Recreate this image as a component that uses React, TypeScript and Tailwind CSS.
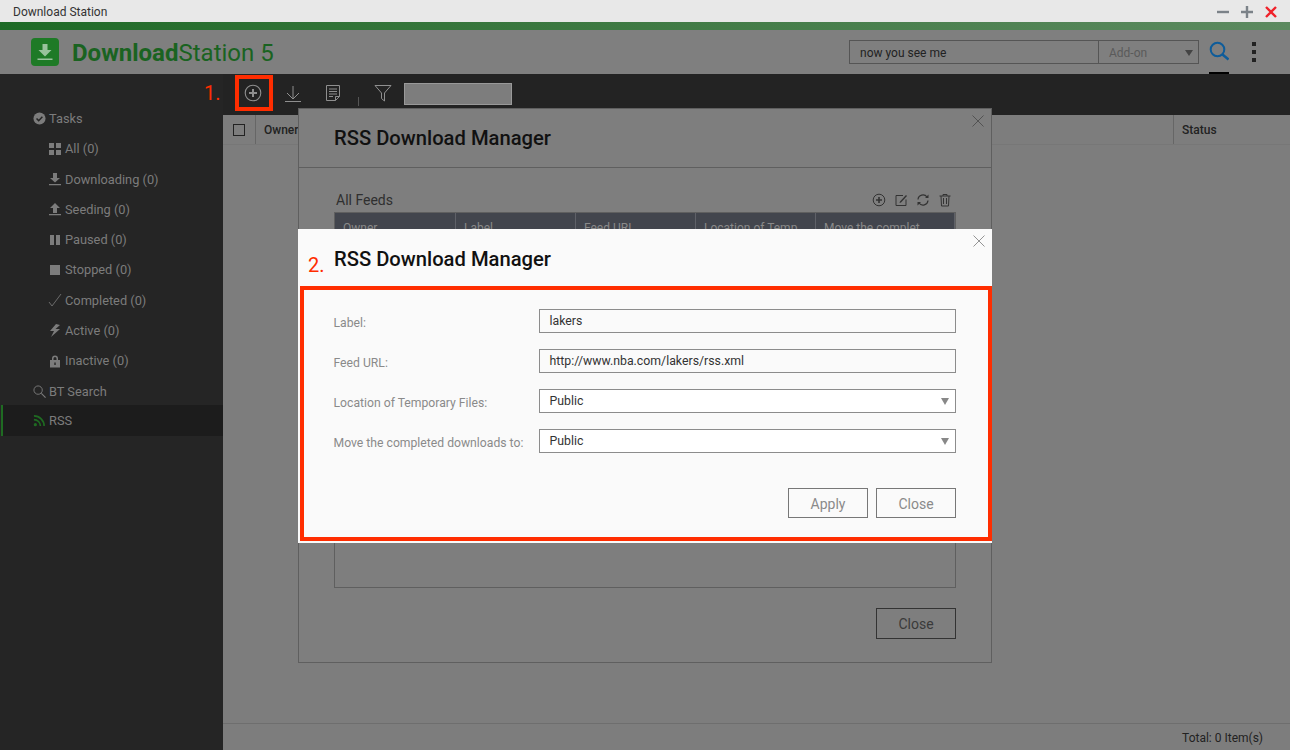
import { ReactNode } from 'react';

const Ico = ({ children, className = 'w-[14px] h-[14px]' }: { children: ReactNode; className?: string }) => (
  <svg viewBox="0 0 14 14" className={`${className} shrink-0`} fill="currentColor">
    {children}
  </svg>
);

const tasks: { label: string; icon: ReactNode }[] = [
  { label: 'All (0)', icon: <path d="M1 1h5v5H1zM8 1h5v5H8zM1 8h5v5H1zM8 8h5v5H8z" /> },
  { label: 'Downloading (0)', icon: <path d="M5 1h4v5h3L7 10.500 2 6h3zM1 12h12v1.200H1z" /> },
  { label: 'Seeding (0)', icon: <path d="M7 1l5 5H9v5H5V6H2zM1 12h12v1.200H1z" /> },
  { label: 'Paused (0)', icon: <path d="M2 2h4v10H2zM8 2h4v10H8z" /> },
  { label: 'Stopped (0)', icon: <path d="M2 2h10v10H2z" /> },
  { label: 'Completed (0)', icon: <path d="M1 9l3 4 9-12" fill="none" stroke="currentColor" strokeWidth="0.8" /> },
  { label: 'Active (0)', icon: <path d="M8 0L2 7h4l-3 6 9-8H7.500L12 1z" /> },
  { label: 'Inactive (0)', icon: <path d="M4 6V4.500a3 3 0 0 1 6 0V6h2v7.500H2V6zm1.500 0h3V4.500a1.500 1.500 0 0 0-3 0zM6.300 8.500v2.500h1.400V8.500z" fillRule="evenodd" /> },
];

const Sidebar = () => (
  <aside className="w-[223px] shrink-0 bg-[#252525] pt-[29.400px] text-[12.800px] text-[#7c7c7c]">
    <div className="flex h-[30.300px] items-center gap-[3px] pl-[33px]">
      <Ico className="w-[13px] h-[13px]">
        <circle cx="7" cy="7" r="6.500" />
        <path d="M3.800 7l2.300 2.300 4-4.300" fill="none" stroke="#252525" strokeWidth="1.600" />
      </Ico>
      <span>Tasks</span>
    </div>
    {tasks.map((t) => (
      <div key={t.label} className="flex h-[30.300px] items-center gap-[3px] pl-[48px]">
        <Ico>{t.icon}</Ico>
        <span>{t.label}</span>
      </div>
    ))}
    <div className="flex h-[30.300px] items-center gap-[3px] pl-[33px]">
      <Ico className="w-[13px] h-[13px]">
        <circle cx="5.500" cy="5.500" r="4.500" fill="none" stroke="currentColor" strokeWidth="1" />
        <path d="M9 9l4.500 4.500" stroke="currentColor" strokeWidth="1.200" />
      </Ico>
      <span>BT Search</span>
    </div>
    <div className="-mt-[1px] ml-[1px] flex h-[31px] items-center gap-[3px] border-l-2 border-[#1f6b22] bg-[#1c1c1c] pl-[30px]">
      <Ico className="w-[13px] h-[13px] text-[#1f6b22]">
        <circle cx="2.500" cy="11.500" r="1.700" />
        <path d="M1 6a7 7 0 0 1 7 7M1 2a11 11 0 0 1 11 11" fill="none" stroke="currentColor" strokeWidth="1.800" />
      </Ico>
      <span>RSS</span>
    </div>
  </aside>
);

const Toolbar = () => (
  <div className="flex h-[41px] shrink-0 items-center bg-[#232323] pb-[1px] pl-[20px] text-[#8f8f8f]">
    <svg viewBox="0 0 20 20" className="mb-[2px] w-5 h-5 shrink-0">
      <circle cx="10" cy="10" r="7.800" fill="none" stroke="currentColor" strokeWidth="1.100" />
      <path d="M10 6v8M6 10h8" stroke="currentColor" strokeWidth="2" />
    </svg>
    <svg viewBox="0 0 20 20" className="mb-[2px] w-5 h-5 ml-5 shrink-0">
      <path d="M10 3v13M4 10l6 6 6-6M2 18.500h16" fill="none" stroke="currentColor" strokeWidth="1" />
    </svg>
    <svg viewBox="0 0 20 20" className="mb-[2px] w-5 h-5 ml-5 shrink-0">
      <path d="M3.500 2.500h13v11l-4 4h-9zM12.500 17.500v-4h4M6 6h8M6 8.500h8M6 11h8M6 13.500h4" fill="none" stroke="currentColor" strokeWidth="1" />
    </svg>
    <span className="ml-[15px] mt-[15px] h-[9px] w-px bg-[#555]" />
    <svg viewBox="0 0 20 20" className="mb-[2px] w-5 h-5 ml-[14px] shrink-0">
      <path d="M2 2.500h16l-6.500 7.500v8l-3-2.500V10z" fill="none" stroke="currentColor" strokeWidth="1" />
    </svg>
    <div className="ml-[11px] h-[22px] w-[108px] border border-[#999] bg-[#7d7d7d]" />
  </div>
);

const TableHeader = () => (
  <div className="flex h-[30px] shrink-0 items-center border-b border-[#777] text-[12px] font-medium text-[#222]">
    <div className="flex h-full w-[33px] items-center pl-[10px] border-r border-[#666]">
      <span className="h-[12px] w-[12px] border border-[#222]" />
    </div>
    <span className="ml-[8px] flex-1">Owner</span>
    <div className="flex h-full w-[117px] items-center pl-[8px] border-l border-[#666]">Status</div>
  </div>
);

const CloseX = ({ className }: { className: string }) => (
  <svg viewBox="0 0 12 12" className={`absolute right-[7px] w-[12px] h-[12px] ${className}`}>
    <path d="M0.500 0.500l11 11M11.500 0.500l-11 11" stroke="currentColor" strokeWidth="0.900" fill="none" />
  </svg>
);

const BackModal = () => (
  <div className="absolute left-[298px] top-[108px] h-[555px] w-[694px] border border-[#5f5f5f] bg-[#7e7e7e]">
    <CloseX className="top-[6px] text-[#4d4d4d]" />
    <div className="flex h-[59px] items-center border-b border-[#5f5f5f] pl-[35px] pt-[1px] text-[20.200px] font-medium text-[#111]">
      RSS Download Manager
    </div>
    <div className="px-[35px] pt-[21px]">
      <div className="flex h-[22px] items-center justify-between pl-[2px] text-[14px] text-[#2f2f2f]">
        <span>All Feeds</span>
        <div className="flex items-center gap-[8px] pr-[4px] text-[#333]">
          <svg viewBox="0 0 14 14" className="w-[14px] h-[14px]">
            <circle cx="7" cy="7" r="5.800" fill="none" stroke="currentColor" strokeWidth="1" />
            <path d="M7 4v6M4 7h6" stroke="currentColor" strokeWidth="1.600" />
          </svg>
          <svg viewBox="0 0 14 14" className="w-[14px] h-[14px]">
            <path d="M9 2.500H2v10h10V6.500" fill="none" stroke="currentColor" strokeWidth="1" />
            <path d="M6 8.500l6-6.500 1 1-6 6.500-1.500 0.500z" fill="currentColor" />
          </svg>
          <svg viewBox="0 0 14 14" className="w-[14px] h-[14px]">
            <path d="M2 6.500a5 5 0 0 1 9-2.500M12 7.500a5 5 0 0 1-9 2.500" fill="none" stroke="currentColor" strokeWidth="1.200" />
            <path d="M12.500 1.500v3.500H9zM1.500 12.500V9H5z" fill="currentColor" />
          </svg>
          <svg viewBox="0 0 14 14" className="w-[14px] h-[14px]">
            <path d="M1.500 3h11M5 3V1.500h4V3M3 3l0.500 10h7l0.500-10M5.500 5v6M8.500 5v6" fill="none" stroke="currentColor" strokeWidth="1" />
          </svg>
        </div>
      </div>
      <div className="mt-[1px] h-[376px] border border-[#5f5f5f]">
        <div className="grid h-[30px] grid-cols-[121px_120px_120px_120px_1fr] bg-[#42454d] text-[12px] text-[#8a8a8a]">
          {['Owner', 'Label', 'Feed URL', 'Location of Temp', 'Move the complet'].map((c) => (
            <div key={c} className="border-r border-[#5f6168] pl-[8px] pt-[6px]">
              {c}
            </div>
          ))}
        </div>
      </div>
      <div className="mt-[20px] flex justify-end">
        <div className="flex h-[31px] w-[80px] items-center justify-center border border-[#333] pt-[2px] text-[14px] text-[#3a3a3a]">
          Close
        </div>
      </div>
    </div>
  </div>
);

const Field = ({ label, value, select }: { label: string; value: string; select?: boolean }) => (
  <div className="flex h-[24px] items-center">
    <span className="w-[205px] shrink-0 pt-[5px] text-[12.200px] text-[#8a8a8a]">{label}</span>
    <div
      className={`flex h-[24px] flex-1 items-center justify-between border border-[#8c8c8c] pl-[10px] pr-[6px] pt-[1px] text-[12.300px] text-[#333] ${
        select ? 'bg-white' : 'bg-[#fafafa]'
      }`}
    >
      <span>{value}</span>
      {select && <span className="h-0 w-0 border-x-[4px] border-t-[7px] border-x-transparent border-t-[#888]" />}
    </div>
  </div>
);

const FrontModal = () => (
  <div className="absolute left-[298px] top-[229px] h-[314px] w-[694px] bg-[#fafafa]">
    <CloseX className="top-[6px] text-[#888]" />
    <div className="flex h-[57px] items-center pl-[36px] pt-[3px] text-[20.200px] font-medium text-[#111]">
      RSS Download Manager
    </div>
    <div className="ml-[2px] h-[255px] border-[4.500px] border-[#ff2d00] pl-[29.500px] pr-[32px] pt-[19px]">
      <div className="flex flex-col gap-[16px]">
        <Field label="Label:" value="lakers" />
        <Field label="Feed URL:" value="http://www.nba.com/lakers/rss.xml" />
        <Field label="Location of Temporary Files:" value="Public" select />
        <Field label="Move the completed downloads to:" value="Public" select />
      </div>
      <div className="mt-[35px] flex justify-end gap-[8px] text-[14px] text-[#8a8a8a]">
        <div className="flex h-[30px] w-[80px] items-center justify-center border border-[#777] pt-[2px]">Apply</div>
        <div className="flex h-[30px] w-[80px] items-center justify-center border border-[#777] pt-[2px]">Close</div>
      </div>
    </div>
  </div>
);

export default function App() {
  return (
    <div className="relative flex h-[750px] w-[1290px] flex-col overflow-hidden bg-[#7d7d7d] font-['Roboto',sans-serif]">
      {/* window title */}
      <div className="flex h-[22px] shrink-0 items-center justify-between bg-[#e8e8e8] pl-[13px] pr-[13px] pt-[1px] text-[12px] text-[#333]">
        <span>Download Station</span>
        <div className="flex items-center gap-[12px]">
          <svg viewBox="0 0 12 12" className="w-[12px] h-[12px] text-[#7b8288]">
            <path d="M0 6h12" stroke="currentColor" strokeWidth="2.400" />
          </svg>
          <svg viewBox="0 0 12 12" className="w-[12px] h-[12px] text-[#7b8288]">
            <path d="M0 6h12M6 0v12" stroke="currentColor" strokeWidth="2.400" />
          </svg>
          <svg viewBox="0 0 12 12" className="w-[12px] h-[12px] text-[#f0222a]">
            <path d="M1 1l10 10M11 1L1 11" stroke="currentColor" strokeWidth="2.400" />
          </svg>
        </div>
      </div>
      <div className="h-[8px] shrink-0 bg-gradient-to-r from-[#1d6a26] to-[#5c8a60]" />

      {/* app header */}
      <div className="flex h-[44px] shrink-0 items-center bg-[#7f7f7f] pl-[31px] pr-[34px]">
        <div className="flex h-[28px] w-[28px] items-center justify-center rounded-[4px] bg-[#1e7a26]">
          <svg viewBox="0 0 20 20" className="w-5 h-5 text-[#98c29b]">
            <path d="M7.500 2h5v6h4L10 14.500 3.500 8h4zM2.500 16.500h15v1.500h-15z" fill="currentColor" />
          </svg>
        </div>
        <div className="ml-[13px] mt-[2px] text-[24px] leading-none text-[#1a6321]">
          <span className="font-bold">Download</span>Station 5
        </div>
        <div className="ml-auto flex h-[24px] w-[350px] border border-[#555] text-[12px]">
          <div className="flex w-[249px] items-center border-r border-[#555] pl-[10px] pt-[1px] text-[#222]">now you see me</div>
          <div className="flex flex-1 items-center justify-between pl-[10px] pr-[5px] pt-[1px] text-[#5a5a5a]">
            <span>Add-on</span>
            <span className="h-0 w-0 border-x-[4.500px] border-t-[6px] border-x-transparent border-t-[#444]" />
          </div>
        </div>
        <svg viewBox="0 0 20 20" className="-mt-[2px] ml-[10px] w-5 h-5 text-[#0e5c9a] shrink-0">
          <circle cx="8.500" cy="8.500" r="6.800" fill="none" stroke="currentColor" strokeWidth="2" />
          <path d="M13.500 13.500l6 5" stroke="currentColor" strokeWidth="2.400" />
        </svg>
        <div className="ml-[23px] flex flex-col gap-[4px]">
          <span className="h-[4px] w-[4px] bg-[#222]" />
          <span className="h-[4px] w-[4px] bg-[#222]" />
          <span className="h-[4px] w-[4px] bg-[#222]" />
        </div>
      </div>

      <div className="flex min-h-0 flex-1">
        <Sidebar />
        <main className="flex min-w-0 flex-1 flex-col">
          <Toolbar />
          <TableHeader />
          <div className="flex-1" />
          <div className="flex h-[27px] shrink-0 items-center justify-end border-t border-[#6e6e6e] pr-[27px] pt-[1px] text-[12px] text-[#222]">
            Total: 0 Item(s)
          </div>
        </main>
      </div>

      {/* underline beneath the search icon */}
      <div className="absolute left-[1209px] top-[72px] h-[2px] w-[20px] bg-black" />

      <BackModal />
      <FrontModal />

      {/* annotations */}
      <span className="absolute left-[204px] top-[80px] text-[20px] leading-[26px] text-[#ff2d00]">1.</span>
      <div className="absolute left-[235px] top-[75px] h-[36px] w-[38px] border-[4px] border-[#ff2d00]" />
      <span className="absolute left-[308px] top-[252px] text-[20px] leading-[26px] text-[#ff2d00]">2.</span>
    </div>
  );
}
